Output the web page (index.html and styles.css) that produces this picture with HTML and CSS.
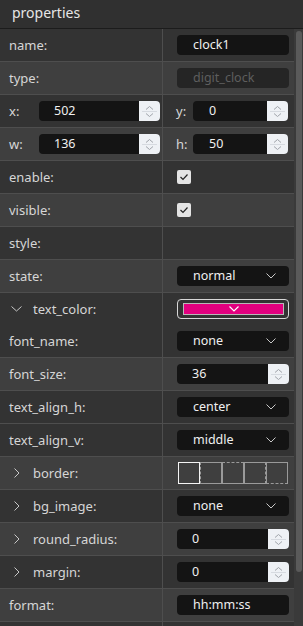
FILE: index.html
```html
<!DOCTYPE html>
<html>
<head>
<meta charset="utf-8">
<link rel="stylesheet" href="styles.css">
</head>
<body>
<div class="panel">
  <div class="header">properties</div>
  <div class="body">
    <div class="list">
      <div class="row dark">
        <div class="lcol"><span class="label">name:</span></div>
        <div class="rcol"><div class="input">clock1</div></div>
      </div>
      <div class="row light">
        <div class="lcol"><span class="label">type:</span></div>
        <div class="rcol"><div class="input disabled">digit_clock</div></div>
      </div>
      <div class="row dark">
        <div class="lcol pair"><span class="label">x:</span>
          <div class="num wide"><span class="val">502</span><span class="spin"><svg width="21" height="20" viewBox="0 0 21 20"><path d="M7 8.5 L10.5 5.5 L14 8.5" fill="none" stroke="#a0a4aa" stroke-width="1"/><path d="M3 10.5 H18" stroke="#d6dae0" stroke-width="1"/><path d="M7 12.5 L10.5 15.5 L14 12.5" fill="none" stroke="#a0a4aa" stroke-width="1"/></svg></span></div>
        </div>
        <div class="rcol pair"><span class="label">y:</span>
          <div class="num narrow"><span class="val">0</span><span class="spin"><svg width="21" height="20" viewBox="0 0 21 20"><path d="M7 8.5 L10.5 5.5 L14 8.5" fill="none" stroke="#a0a4aa" stroke-width="1"/><path d="M3 10.5 H18" stroke="#d6dae0" stroke-width="1"/><path d="M7 12.5 L10.5 15.5 L14 12.5" fill="none" stroke="#a0a4aa" stroke-width="1"/></svg></span></div>
        </div>
      </div>
      <div class="row light">
        <div class="lcol pair"><span class="label">w:</span>
          <div class="num wide"><span class="val">136</span><span class="spin"><svg width="21" height="20" viewBox="0 0 21 20"><path d="M7 8.5 L10.5 5.5 L14 8.5" fill="none" stroke="#a0a4aa" stroke-width="1"/><path d="M3 10.5 H18" stroke="#d6dae0" stroke-width="1"/><path d="M7 12.5 L10.5 15.5 L14 12.5" fill="none" stroke="#a0a4aa" stroke-width="1"/></svg></span></div>
        </div>
        <div class="rcol pair"><span class="label">h:</span>
          <div class="num narrow"><span class="val">50</span><span class="spin"><svg width="21" height="20" viewBox="0 0 21 20"><path d="M7 8.5 L10.5 5.5 L14 8.5" fill="none" stroke="#a0a4aa" stroke-width="1"/><path d="M3 10.5 H18" stroke="#d6dae0" stroke-width="1"/><path d="M7 12.5 L10.5 15.5 L14 12.5" fill="none" stroke="#a0a4aa" stroke-width="1"/></svg></span></div>
        </div>
      </div>
      <div class="row dark">
        <div class="lcol"><span class="label">enable:</span></div>
        <div class="rcol"><span class="check"><svg width="14" height="14" viewBox="0 0 14 14"><path d="M3.5 7 L6 9.5 L10.5 4.5" fill="none" stroke="#222" stroke-width="1.2"/></svg></span></div>
      </div>
      <div class="row light">
        <div class="lcol"><span class="label">visible:</span></div>
        <div class="rcol"><span class="check"><svg width="14" height="14" viewBox="0 0 14 14"><path d="M3.5 7 L6 9.5 L10.5 4.5" fill="none" stroke="#222" stroke-width="1.2"/></svg></span></div>
      </div>
      <div class="row dark">
        <div class="lcol"><span class="label">style:</span></div>
        <div class="rcol"></div>
      </div>
      <div class="row light">
        <div class="lcol"><span class="label">state:</span></div>
        <div class="rcol"><div class="select"><span>normal</span><svg width="10" height="6" viewBox="0 0 10 6"><path d="M0.5 0.5 L5 5 L9.5 0.5" fill="none" stroke="#c8c8c8" stroke-width="1"/></svg></div></div>
      </div>
      <div class="group dark">
        <div class="subrow">
          <div class="lcol"><svg class="exp" width="11" height="6" viewBox="0 0 11 6"><path d="M0.5 0.5 L5.5 5 L10.5 0.5" fill="none" stroke="#c8c8c8" stroke-width="1"/></svg><span class="label">text_color:</span></div>
          <div class="rcol"><div class="color"><div class="swatch"><svg width="10" height="6" viewBox="0 0 10 6"><path d="M0.5 0.5 L5 5 L9.5 0.5" fill="none" stroke="#fff" stroke-width="1.2"/></svg></div></div></div>
        </div>
        <div class="subrow">
          <div class="lcol"><span class="label">font_name:</span></div>
          <div class="rcol"><div class="select"><span>none</span><svg width="10" height="6" viewBox="0 0 10 6"><path d="M0.5 0.5 L5 5 L9.5 0.5" fill="none" stroke="#c8c8c8" stroke-width="1"/></svg></div></div>
        </div>
      </div>
      <div class="row light">
        <div class="lcol"><span class="label">font_size:</span></div>
        <div class="rcol"><div class="num full"><span class="val">36</span><span class="spin"><svg width="21" height="20" viewBox="0 0 21 20"><path d="M7 8.5 L10.5 5.5 L14 8.5" fill="none" stroke="#a0a4aa" stroke-width="1"/><path d="M3 10.5 H18" stroke="#d6dae0" stroke-width="1"/><path d="M7 12.5 L10.5 15.5 L14 12.5" fill="none" stroke="#a0a4aa" stroke-width="1"/></svg></span></div></div>
      </div>
      <div class="row dark">
        <div class="lcol"><span class="label">text_align_h:</span></div>
        <div class="rcol"><div class="select"><span>center</span><svg width="10" height="6" viewBox="0 0 10 6"><path d="M0.5 0.5 L5 5 L9.5 0.5" fill="none" stroke="#c8c8c8" stroke-width="1"/></svg></div></div>
      </div>
      <div class="row dark">
        <div class="lcol"><span class="label">text_align_v:</span></div>
        <div class="rcol"><div class="select"><span>middle</span><svg width="10" height="6" viewBox="0 0 10 6"><path d="M0.5 0.5 L5 5 L9.5 0.5" fill="none" stroke="#c8c8c8" stroke-width="1"/></svg></div></div>
      </div>
      <div class="row light">
        <div class="lcol"><svg class="exp" width="11" height="10" viewBox="0 0 11 10"><path d="M3.5 0.5 L8 5 L3.5 9.5" fill="none" stroke="#c8c8c8" stroke-width="1"/></svg><span class="label">border:</span></div>
        <div class="rcol"><div class="borders"><span class="bx sel"></span><span class="bx dl"></span><span class="bx dt"></span><span class="bx dr"></span><span class="bx db"></span></div></div>
      </div>
      <div class="row dark">
        <div class="lcol"><svg class="exp" width="11" height="10" viewBox="0 0 11 10"><path d="M3.5 0.5 L8 5 L3.5 9.5" fill="none" stroke="#c8c8c8" stroke-width="1"/></svg><span class="label">bg_image:</span></div>
        <div class="rcol"><div class="select"><span>none</span><svg width="10" height="6" viewBox="0 0 10 6"><path d="M0.5 0.5 L5 5 L9.5 0.5" fill="none" stroke="#c8c8c8" stroke-width="1"/></svg></div></div>
      </div>
      <div class="row light">
        <div class="lcol"><svg class="exp" width="11" height="10" viewBox="0 0 11 10"><path d="M3.5 0.5 L8 5 L3.5 9.5" fill="none" stroke="#c8c8c8" stroke-width="1"/></svg><span class="label">round_radius:</span></div>
        <div class="rcol"><div class="num full"><span class="val">0</span><span class="spin"><svg width="21" height="20" viewBox="0 0 21 20"><path d="M7 8.5 L10.5 5.5 L14 8.5" fill="none" stroke="#a0a4aa" stroke-width="1"/><path d="M3 10.5 H18" stroke="#d6dae0" stroke-width="1"/><path d="M7 12.5 L10.5 15.5 L14 12.5" fill="none" stroke="#a0a4aa" stroke-width="1"/></svg></span></div></div>
      </div>
      <div class="row dark">
        <div class="lcol"><svg class="exp" width="11" height="10" viewBox="0 0 11 10"><path d="M3.5 0.5 L8 5 L3.5 9.5" fill="none" stroke="#c8c8c8" stroke-width="1"/></svg><span class="label">margin:</span></div>
        <div class="rcol"><div class="num full"><span class="val">0</span><span class="spin"><svg width="21" height="20" viewBox="0 0 21 20"><path d="M7 8.5 L10.5 5.5 L14 8.5" fill="none" stroke="#a0a4aa" stroke-width="1"/><path d="M3 10.5 H18" stroke="#d6dae0" stroke-width="1"/><path d="M7 12.5 L10.5 15.5 L14 12.5" fill="none" stroke="#a0a4aa" stroke-width="1"/></svg></span></div></div>
      </div>
      <div class="row light">
        <div class="lcol"><span class="label">format:</span></div>
        <div class="rcol"><div class="input">hh:mm:ss</div></div>
      </div>
      <div class="row dark">
        <div class="lcol"></div>
        <div class="rcol"></div>
      </div>
    </div>
    <div class="track"><div class="thumb"></div></div>
  </div>
</div>
</body>
</html>
```

FILE: styles.css
```css
* { box-sizing: border-box; }
html, body { margin: 0; padding: 0; }
body {
  width: 303px;
  height: 626px;
  overflow: hidden;
  background: #333333;
  font-family: "Noto Sans", "Open Sans", sans-serif;
  color: #d8d8d8;
}
.panel { display: flex; flex-direction: column; height: 626px; }
.header {
  height: 29px;
  flex: none;
  background: #303030;
  border-bottom: 1px solid #1c1c1c;
  padding-left: 12px;
  font-size: 14px;
  line-height: 26px;
  color: #e6e6e6;
}
.body { display: flex; flex: 1; overflow: hidden; }
.list { width: 294px; flex: none; display: flex; flex-direction: column; }
.row, .group {
  flex: none;
  border-bottom: 1px solid #4e4e4e;
}
.row { height: 33px; display: flex; }
.group { height: 65px; display: flex; flex-direction: column; }
.subrow { height: 32px; display: flex; }
.dark { background: #333333; }
.light { background: #3f3f3f; }
.lcol {
  width: 163px;
  flex: none;
  border-right: 1px solid #4e4e4e;
  display: flex;
  align-items: center;
  padding-left: 9px;
}
.rcol {
  flex: 1;
  display: flex;
  align-items: center;
  padding-left: 14px;
}
.label { font-size: 13px; color: #d6d6d6; }
.exp { margin-left: 2px; margin-right: 11px; flex: none; }
.input, .select, .num, .color {
  width: 112px;
  height: 20px;
  border-radius: 4px;
  background: #141414;
  font-size: 12.5px;
  color: #f0f0f0;
  line-height: 20px;
}
.input { padding-left: 16px; }
.input.disabled { background: #252525; color: #5e5e5e; }
.select {
  display: flex;
  align-items: center;
  justify-content: space-between;
  padding-left: 16px;
  padding-right: 13px;
}
.num { display: flex; overflow: hidden; }
.num .val { flex: 1; padding-left: 15px; }
.num .spin {
  width: 21px;
  flex: none;
  background: #eef1f5;
  display: flex;
}
.pair .label { width: 30px; flex: none; }
.lcol.pair { padding-left: 9px; }
.num.wide { width: 121px; }
.num.narrow { width: 95px; }
.num.narrow .val { padding-left: 16px; }
.rcol.pair { padding-left: 13px; }
.rcol.pair .label { width: 17px; }
.num.full .val { padding-left: 15px; }
.check {
  width: 14px;
  height: 14px;
  border-radius: 2px;
  background: #e4e4e4;
  display: flex;
}
.color {
  background: transparent;
  border: 1px solid #d8d8d8;
  padding: 3px 4px 3px 5px;
}
.swatch {
  height: 12px;
  background: #e2007f;
  border: 1px solid #b8b8b8;
  display: flex;
  align-items: center;
  justify-content: center;
}
.borders { display: flex; height: 22px; margin-left: 1px; }
.bx {
  width: 22px;
  height: 22px;
  border: 1px solid #9a9a9a;
}
.bx.sel { border-color: #f4f4f4; }
.bx.dl { border-left-style: dashed; }
.bx.dt { border-top-style: dashed; }
.bx.dr { border-right-style: dashed; }
.bx.db { border-bottom-style: dashed; }
.track {
  width: 9px;
  flex: none;
  background: #3a3a3a;
  padding: 2px 1px 0 2px;
}
.thumb {
  height: 541px;
  border-radius: 3px;
  background: #5a5a5a;
}
```
